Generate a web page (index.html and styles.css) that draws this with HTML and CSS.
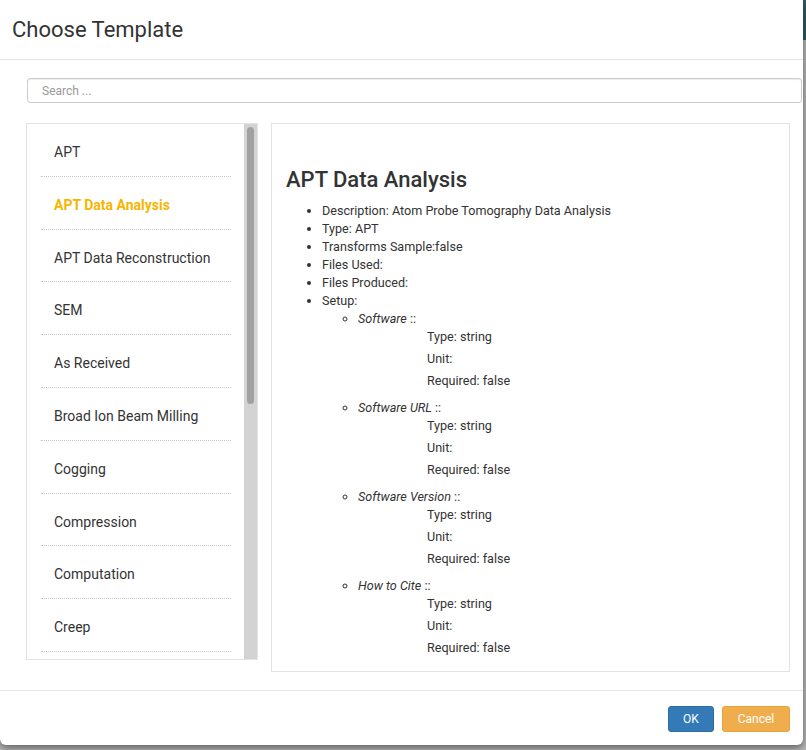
FILE: index.html
```html
<!DOCTYPE html>
<html>
<head>
<meta charset="utf-8">
<link rel="stylesheet" href="styles.css">
</head>
<body>
<div class="modal">
  <div class="modal-header">
    <h4 class="modal-title">Choose Template</h4>
  </div>
  <div class="modal-body">
    <input class="search" type="text" placeholder="Search ...">
    <div class="columns">
      <div class="list-box">
        <ul class="tpl-list">
          <li>APT</li>
          <li class="active">APT Data Analysis</li>
          <li>APT Data Reconstruction</li>
          <li>SEM</li>
          <li>As Received</li>
          <li>Broad Ion Beam Milling</li>
          <li>Cogging</li>
          <li>Compression</li>
          <li>Computation</li>
          <li>Creep</li>
        </ul>
        <div class="scrollbar"><div class="thumb"></div></div>
      </div>
      <div class="detail">
        <h3 class="detail-title">APT Data Analysis</h3>
        <ul class="props">
          <li>Description: Atom Probe Tomography Data Analysis</li>
          <li>Type: APT</li>
          <li>Transforms Sample:false</li>
          <li>Files Used:</li>
          <li>Files Produced:</li>
          <li>Setup:
            <ul class="setup">
              <li><em>Software</em> ::
                <div class="attrs">
                  <p>Type: string</p>
                  <p>Unit:</p>
                  <p>Required: false</p>
                </div>
              </li>
              <li><em>Software URL</em> ::
                <div class="attrs">
                  <p>Type: string</p>
                  <p>Unit:</p>
                  <p>Required: false</p>
                </div>
              </li>
              <li><em>Software Version</em> ::
                <div class="attrs">
                  <p>Type: string</p>
                  <p>Unit:</p>
                  <p>Required: false</p>
                </div>
              </li>
              <li><em>How to Cite</em> ::
                <div class="attrs">
                  <p>Type: string</p>
                  <p>Unit:</p>
                  <p>Required: false</p>
                </div>
              </li>
            </ul>
          </li>
        </ul>
      </div>
    </div>
  </div>
  <div class="modal-footer">
    <button class="btn btn-primary">OK</button>
    <button class="btn btn-warning">Cancel</button>
  </div>
</div>
</body>
</html>
```
FILE: styles.css
```css
* { box-sizing: border-box; }
html, body { height: 100%; }
body {
  margin: 0;
  font-family: Roboto, "Liberation Sans", sans-serif;
  color: #333;
  background: linear-gradient(#2f5c68 0, #2f5c68 40px, #b9b9b9 40px, #b9b9b9 100%);
  overflow: hidden;
}
.modal {
  width: 803px;
  height: 745px;
  background: #fff;
  border-radius: 0 0 6px 6px;
  box-shadow: 0 3px 9px rgba(0,0,0,0.5);
  display: flex;
  flex-direction: column;
}
.modal-header {
  height: 60px;
  padding: 0 12px;
  border-bottom: 1px solid #e5e5e5;
  display: flex;
  align-items: center;
}
.modal-title {
  margin: 0;
  font-size: 22px;
  font-weight: 400;
  color: #333;
  line-height: 24px;
}
.modal-body {
  padding: 18px 0 0 26px;
  flex: 1;
}
.search {
  display: block;
  margin-left: 1px;
  width: 775px;
  height: 25px;
  border: 1px solid #ccc;
  border-radius: 3px;
  padding: 0 14px;
  font-family: Roboto, "Liberation Sans", sans-serif;
  font-size: 12px;
  color: #333;
  box-shadow: inset 0 1px 1px rgba(0,0,0,0.075);
  outline: none;
}
.search::placeholder { color: #999; }
.columns {
  display: flex;
  align-items: flex-start;
  gap: 13px;
  margin-top: 20px;
}
.list-box {
  display: flex;
  width: 232px;
  height: 537px;
  border: 1px solid #e3e3e3;
}
.tpl-list {
  list-style: none;
  margin: 0;
  padding: 0;
  flex: 1;
  min-width: 0;
  overflow: hidden;
  font-size: 14px;
}
.scrollbar {
  width: 13px;
  background: #d3d3d3;
  padding: 3px 3px 0;
}
.thumb {
  height: 277px;
  background: #a1a1a1;
  border-radius: 4px;
}
.tpl-list li {
  margin: 0 13px 0 14px;
  padding: 18px 0 13.8px 13px;
  line-height: 20px;
  border-bottom: 1px dotted #c8c8c8;
  white-space: nowrap;
  overflow: hidden;
}
.tpl-list li.active {
  color: #f7b500;
  font-weight: 700;
}
.detail {
  width: 519px;
  height: 549px;
  border: 1px solid #e3e3e3;
  padding: 0 14px;
  overflow: hidden;
}
.detail-title {
  font-size: 22px;
  font-weight: 500;
  line-height: 24px;
  margin: 44px 0 10px;
  color: #333;
}
.props {
  margin: 0;
  padding-left: 36px;
  font-size: 12.6px;
  line-height: 18px;
  list-style: disc;
}
.setup {
  margin: 0;
  padding-left: 36px;
  list-style: circle;
}
.attrs {
  padding-left: 69px;
  padding-bottom: 5px;
}
.attrs p {
  margin: 0 0 4px;
  line-height: 18px;
}
.modal-footer {
  height: 55px;
  border-top: 1px solid #e5e5e5;
  display: flex;
  justify-content: flex-end;
  align-items: flex-start;
  gap: 8px;
  padding: 15px 13px 0 0;
}
.btn {
  height: 26px;
  padding: 0 12px;
  border-radius: 3px;
  font-family: Roboto, "Liberation Sans", sans-serif;
  font-size: 12px;
  color: #fff;
  border: 1px solid transparent;
  line-height: 24px;
}
.btn-primary { background: #337ab7; border-color: #2e6da4; width: 46px; }
.btn-warning { background: #f0ad4e; border-color: #eea236; width: 68px; }
```
